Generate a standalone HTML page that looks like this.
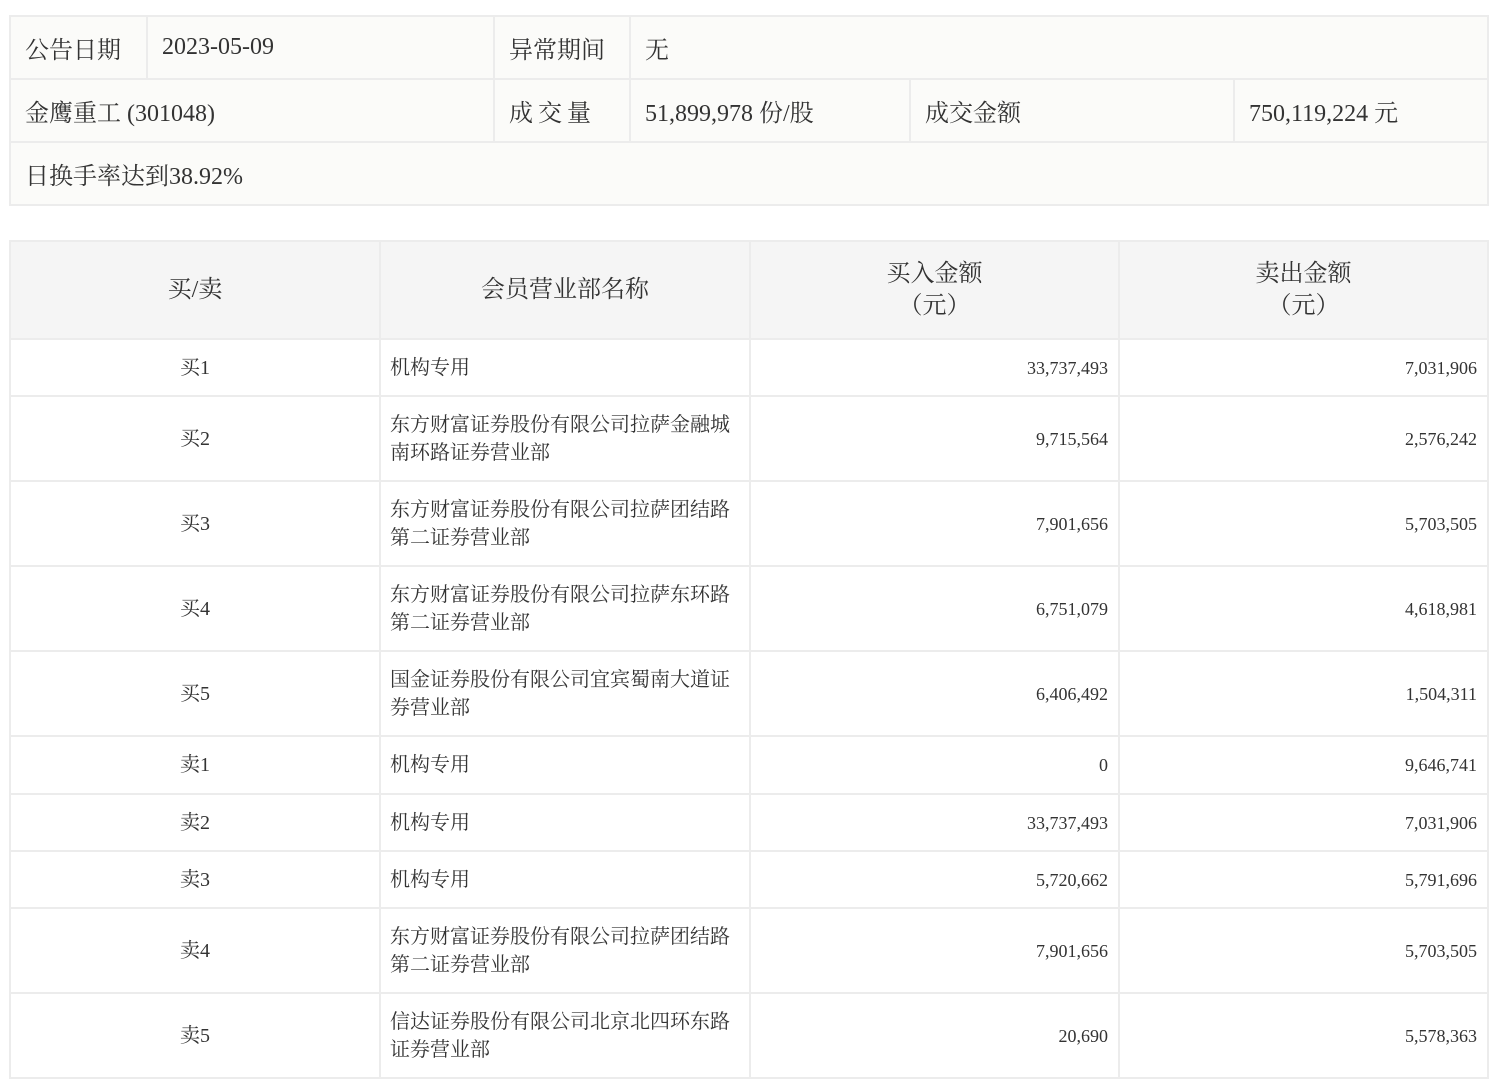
<!DOCTYPE html>
<html><head><meta charset="utf-8"><style>
*{margin:0;padding:0;box-sizing:border-box}
body{width:1496px;height:1086px;background:#fff;position:relative;font-family:"Liberation Serif","Noto Serif CJK SC",serif;color:#333;overflow:hidden}
.c{position:absolute;border:2px solid #ececec;display:flex;align-items:center;overflow:hidden}
.t{background:#fbfbf9;font-size:24px;padding-left:14px}
.h{background:#f5f5f5;font-size:24px;justify-content:center;text-align:center;line-height:32px}
.b{background:#fff;font-size:20px;line-height:28px}
.ctr{justify-content:center}
.l{padding-left:9px;padding-right:9px}
.r{justify-content:flex-end;padding-right:10px}
.num{font-size:18px}
</style></head><body>
<div class="c t" style="left:9px;top:15px;width:139px;height:65px">公告日期</div>
<div class="c t" style="left:146px;top:15px;width:349px;height:65px">2023-05-09</div>
<div class="c t" style="left:493px;top:15px;width:138px;height:65px">异常期间</div>
<div class="c t" style="left:629px;top:15px;width:860px;height:65px">无</div>
<div class="c t" style="left:9px;top:78px;width:486px;height:65px">金鹰重工 (301048)</div>
<div class="c t" style="left:493px;top:78px;width:138px;height:65px;letter-spacing:5px">成交量</div>
<div class="c t" style="left:629px;top:78px;width:282px;height:65px">51,899,978 份/股</div>
<div class="c t" style="left:909px;top:78px;width:326px;height:65px">成交金额</div>
<div class="c t" style="left:1233px;top:78px;width:256px;height:65px">750,119,224 元</div>
<div class="c t" style="left:9px;top:141px;width:1480px;height:65px">日换手率达到38.92%</div>

<div class="c h" style="left:9px;top:240px;width:372px;height:100px">买/卖</div>
<div class="c h" style="left:379px;top:240px;width:372px;height:100px">会员营业部名称</div>
<div class="c h" style="left:749px;top:240px;width:371px;height:100px">买入金额<br>（元）</div>
<div class="c h" style="left:1118px;top:240px;width:371px;height:100px">卖出金额<br>（元）</div>

<div class="c b ctr" style="left:9px;top:338px;width:372px;height:59px">买1</div>
<div class="c b l" style="left:379px;top:338px;width:372px;height:59px">机构专用</div>
<div class="c b r num" style="left:749px;top:338px;width:371px;height:59px">33,737,493</div>
<div class="c b r num" style="left:1118px;top:338px;width:371px;height:59px">7,031,906</div>

<div class="c b ctr" style="left:9px;top:395px;width:372px;height:87px">买2</div>
<div class="c b l" style="left:379px;top:395px;width:372px;height:87px">东方财富证券股份有限公司拉萨金融城南环路证券营业部</div>
<div class="c b r num" style="left:749px;top:395px;width:371px;height:87px">9,715,564</div>
<div class="c b r num" style="left:1118px;top:395px;width:371px;height:87px">2,576,242</div>

<div class="c b ctr" style="left:9px;top:480px;width:372px;height:87px">买3</div>
<div class="c b l" style="left:379px;top:480px;width:372px;height:87px">东方财富证券股份有限公司拉萨团结路第二证券营业部</div>
<div class="c b r num" style="left:749px;top:480px;width:371px;height:87px">7,901,656</div>
<div class="c b r num" style="left:1118px;top:480px;width:371px;height:87px">5,703,505</div>

<div class="c b ctr" style="left:9px;top:565px;width:372px;height:87px">买4</div>
<div class="c b l" style="left:379px;top:565px;width:372px;height:87px">东方财富证券股份有限公司拉萨东环路第二证券营业部</div>
<div class="c b r num" style="left:749px;top:565px;width:371px;height:87px">6,751,079</div>
<div class="c b r num" style="left:1118px;top:565px;width:371px;height:87px">4,618,981</div>

<div class="c b ctr" style="left:9px;top:650px;width:372px;height:87px">买5</div>
<div class="c b l" style="left:379px;top:650px;width:372px;height:87px">国金证券股份有限公司宜宾蜀南大道证券营业部</div>
<div class="c b r num" style="left:749px;top:650px;width:371px;height:87px">6,406,492</div>
<div class="c b r num" style="left:1118px;top:650px;width:371px;height:87px">1,504,311</div>

<div class="c b ctr" style="left:9px;top:735px;width:372px;height:60px">卖1</div>
<div class="c b l" style="left:379px;top:735px;width:372px;height:60px">机构专用</div>
<div class="c b r num" style="left:749px;top:735px;width:371px;height:60px">0</div>
<div class="c b r num" style="left:1118px;top:735px;width:371px;height:60px">9,646,741</div>

<div class="c b ctr" style="left:9px;top:793px;width:372px;height:59px">卖2</div>
<div class="c b l" style="left:379px;top:793px;width:372px;height:59px">机构专用</div>
<div class="c b r num" style="left:749px;top:793px;width:371px;height:59px">33,737,493</div>
<div class="c b r num" style="left:1118px;top:793px;width:371px;height:59px">7,031,906</div>

<div class="c b ctr" style="left:9px;top:850px;width:372px;height:59px">卖3</div>
<div class="c b l" style="left:379px;top:850px;width:372px;height:59px">机构专用</div>
<div class="c b r num" style="left:749px;top:850px;width:371px;height:59px">5,720,662</div>
<div class="c b r num" style="left:1118px;top:850px;width:371px;height:59px">5,791,696</div>

<div class="c b ctr" style="left:9px;top:907px;width:372px;height:87px">卖4</div>
<div class="c b l" style="left:379px;top:907px;width:372px;height:87px">东方财富证券股份有限公司拉萨团结路第二证券营业部</div>
<div class="c b r num" style="left:749px;top:907px;width:371px;height:87px">7,901,656</div>
<div class="c b r num" style="left:1118px;top:907px;width:371px;height:87px">5,703,505</div>

<div class="c b ctr" style="left:9px;top:992px;width:372px;height:87px">卖5</div>
<div class="c b l" style="left:379px;top:992px;width:372px;height:87px">信达证券股份有限公司北京北四环东路证券营业部</div>
<div class="c b r num" style="left:749px;top:992px;width:371px;height:87px">20,690</div>
<div class="c b r num" style="left:1118px;top:992px;width:371px;height:87px">5,578,363</div>
</body></html>
